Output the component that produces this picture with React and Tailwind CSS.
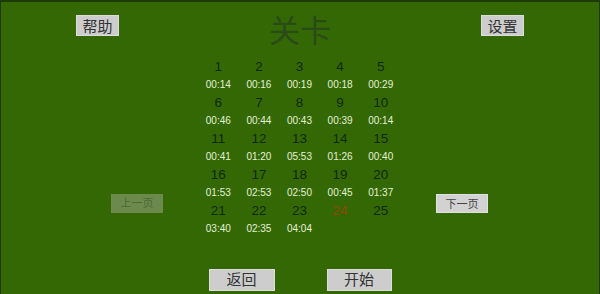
import React from 'react';

const levels = [
    { n: 1, t: '00:14' }, { n: 2, t: '00:16' }, { n: 3, t: '00:19' }, { n: 4, t: '00:18' }, { n: 5, t: '00:29' },
    { n: 6, t: '00:46' }, { n: 7, t: '00:44' }, { n: 8, t: '00:43' }, { n: 9, t: '00:39' }, { n: 10, t: '00:14' },
    { n: 11, t: '00:41' }, { n: 12, t: '01:20' }, { n: 13, t: '05:53' }, { n: 14, t: '01:26' }, { n: 15, t: '00:40' },
    { n: 16, t: '01:53' }, { n: 17, t: '02:53' }, { n: 18, t: '02:50' }, { n: 19, t: '00:45' }, { n: 20, t: '01:37' },
    { n: 21, t: '03:40' }, { n: 22, t: '02:35' }, { n: 23, t: '04:04' }, { n: 24, t: '', current: true }, { n: 25, t: '' },
];

const font = { fontFamily: '"Liberation Sans", "Noto Sans CJK SC", sans-serif' };

const App = () => {
    return (
        <div style={font} className="w-[600px] h-[294px] bg-[#346805] border-t-2 border-x border-[#1d3a08] flex flex-col overflow-hidden">
            {/* Top bar */}
            <div className="flex justify-between items-start px-[75px] pt-[13px] h-[55px]">
                <button className="w-[43px] h-[21px] bg-[#cdcdcd] text-[#333] text-[15px] leading-[21px] border border-[#dcdcdc]">帮助</button>
                <h1 className="text-[31px] leading-[36px] mt-[-1px] text-[#2a4a18]">关卡</h1>
                <button className="w-[43px] h-[21px] bg-[#cdcdcd] text-[#333] text-[15px] leading-[21px] border border-[#dcdcdc]">设置</button>
            </div>

            {/* Level grid with paging */}
            <div className="flex justify-center items-start gap-[35px] mr-[1px]">
                <button className="mt-[137px] w-[52px] h-[19px] bg-[#6c8a4c] text-[#4b6b33] text-[11px] leading-[19px]">上一页</button>
                <div className="grid grid-cols-5 w-[203px]">
                    {levels.map((lv) => (
                        <div key={lv.n} className="flex flex-col items-center h-[36px]">
                            <span className={`h-[19px] leading-[19px] text-[13.5px] ${lv.current ? 'text-[#b83a06] opacity-70' : 'text-[#102808]'}`}>{lv.n}</span>
                            <span className="h-[17px] leading-[17px] text-[10px] text-[#e4f2d4]">{lv.t}</span>
                        </div>
                    ))}
                </div>
                <button className="mt-[137px] w-[52px] h-[19px] bg-[#d2d2d2] text-[#444] text-[11px] leading-[19px] border border-[#e0e0e0]">下一页</button>
            </div>

            {/* Bottom buttons */}
            <div className="flex justify-center gap-[52px] mt-auto mb-[3px]">
                <button className="w-[66px] h-[22px] bg-[#cdcdcd] text-[#333] text-[15px] leading-[20px] border border-[#dcdcdc]">返回</button>
                <button className="w-[65px] h-[22px] bg-[#cdcdcd] text-[#333] text-[15px] leading-[20px] border border-[#dcdcdc]">开始</button>
            </div>
        </div>
    );
};

export default App;
